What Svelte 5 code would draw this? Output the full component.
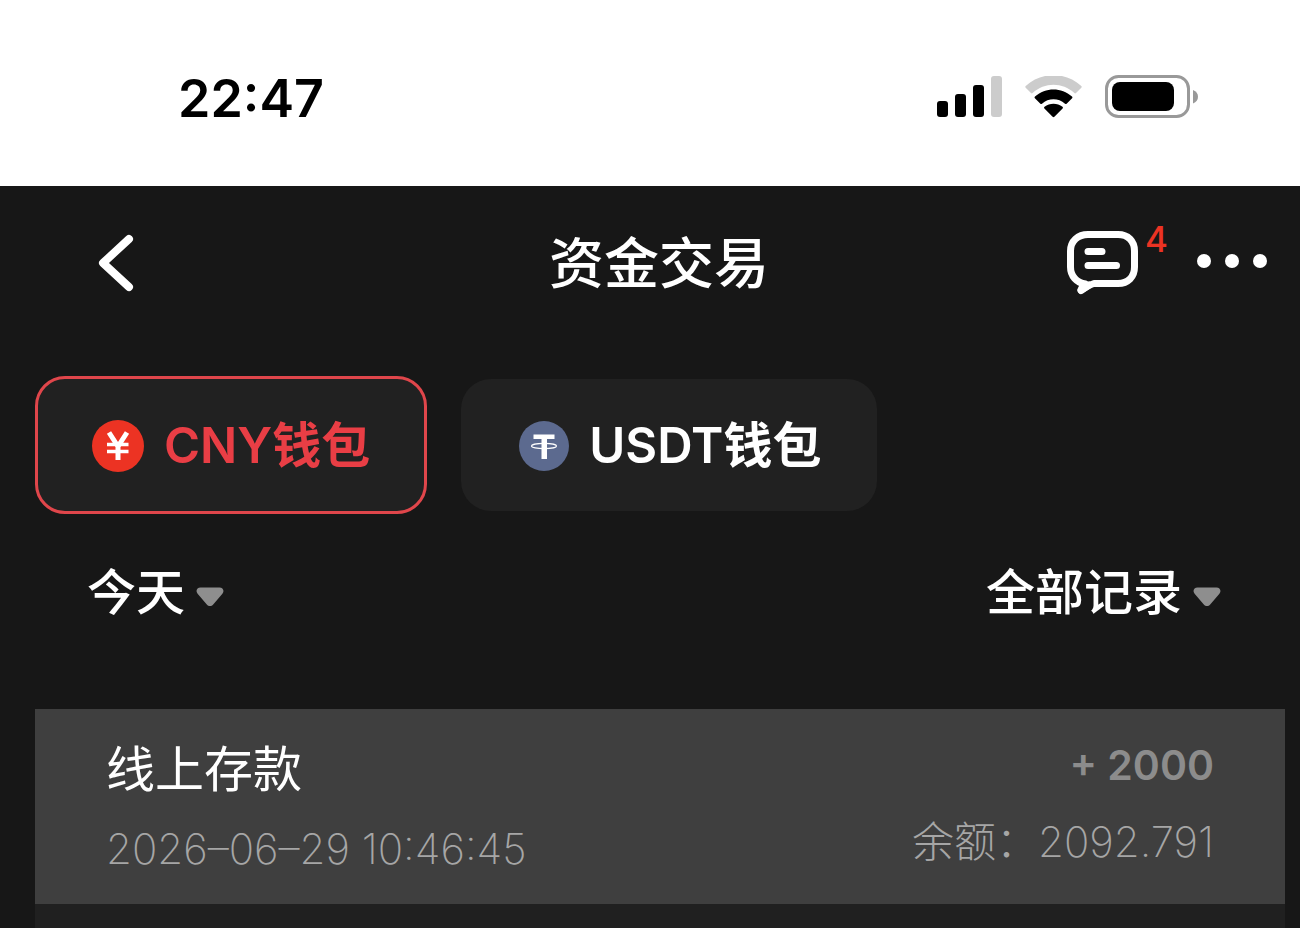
<script lang="ts">
	interface RecordItem {
		title: string;
		time: string;
		amount: string;
		balance: string;
	}

	let wallet = $state('CNY');
	let day = $state('今天');
	let kind = $state('全部记录');

	const unread = 4;
	const records: RecordItem[] = [
		{ title: '线上存款', time: '2026–06–29 10:46:45', amount: '+ 2000', balance: '2092.791' }
	];
</script>

{#snippet caret()}
	<svg class="caret" viewBox="0 0 28 20" aria-hidden="true">
		<path d="M4.500 .5h19c3.600 0 5.200 3.600 2.900 6.200L17.200 17.400c-1.800 2.100-4.600 2.100-6.400 0L1.600 6.700C-.7 4.100.9.500 4.500.500z" />
	</svg>
{/snippet}

<div class="screen">
	<div class="status-bar">
		<span class="clock">22:47</span>
		<div class="status-icons">
			<svg class="signal" viewBox="0 0 66 42" aria-hidden="true">
				<rect x="0" y="25" width="11" height="16" rx="3" />
				<rect x="18" y="18" width="11" height="23" rx="3" />
				<rect x="36" y="9" width="11" height="32" rx="3" />
				<rect x="54" y="0" width="11" height="41" rx="3" fill="#ccc" />
			</svg>
			<svg class="wifi" viewBox="0 0 58 42" aria-hidden="true">
				<path fill="#ccc" d="M.7 10C16.500-4.500 40.500-4.500 56.300 10c.6.600.6 1.100 0 1.700l-5.300 5.300c-.5.500-1 .5-1.600 0-12-11-29.800-11-41.800 0-.6.500-1.100.5-1.600 0L.7 11.700C.1 11.100.1 10.600.7 10z" />
				<path d="M10 20.500c10.600-9.400 26.400-9.400 37 0 .6.600.6 1.100.1 1.700l-5.500 5.500c-.5.500-1 .5-1.600 0-6.600-5.800-16.400-5.800-23 0-.6.500-1.100.5-1.600 0l-5.500-5.500c-.5-.6-.5-1.100.1-1.700z" />
				<path d="M19.500 30.800c5.200-4 12.800-4 18 0 .6.500.6 1.100.1 1.700l-8.200 8.300c-.6.600-1.200.6-1.800 0l-8.200-8.300c-.5-.6-.5-1.200.1-1.700z" />
			</svg>
			<svg class="battery" viewBox="0 0 94 44" aria-hidden="true">
				<rect x="1.500" y="1.500" width="82" height="40" rx="12" fill="none" stroke="#999" stroke-width="3" />
				<rect x="7" y="7" width="62" height="29" rx="8" />
				<path fill="#999" d="M88 15c3.300 1.200 5 3.700 5 6.700s-1.700 5.500-5 6.700z" />
			</svg>
		</div>
	</div>

	<header class="nav">
		<button class="icon-btn back" aria-label="返回">
			<svg viewBox="0 0 36 60" width="36" height="60">
				<path d="M31 7 5 31 31 55" fill="none" stroke="#fff" stroke-width="8" stroke-linecap="round" stroke-linejoin="round" />
			</svg>
		</button>
		<h1>资金交易</h1>
		<div class="nav-actions">
			<button class="icon-btn message" aria-label="消息">
				<svg viewBox="0 0 72 66" width="72" height="66" fill="none" stroke="#fff" stroke-width="7" stroke-linecap="round" stroke-linejoin="round">
					<path d="M21 5.500h30c10 0 16.500 6.500 16.500 16.500v16c0 10-6.500 16.500-16.500 16.500H27c-3.500 1-8.500 4-13 6.500.5-2.500 2.500-4.500 4.500-6C9.500 53.500 3.500 47 3.500 38V22C3.500 12 11 5.500 21 5.500z" />
					<path d="M14 61.500 22 56" />
					<path d="M21 22.500h14M21 36.500h28.500" />
				</svg>
				<span class="badge">{unread}</span>
			</button>
			<button class="icon-btn" aria-label="更多">
				<svg viewBox="0 0 72 16" width="72" height="16" fill="#fff">
					<circle cx="8" cy="7" r="7" />
					<circle cx="36" cy="7" r="7" />
					<circle cx="64" cy="7" r="7" />
				</svg>
			</button>
		</div>
	</header>

	<div class="wallets">
		<button class="wallet" class:active={wallet === 'CNY'} onclick={() => (wallet = 'CNY')}>
			<svg viewBox="0 0 52 52" width="52" height="52" aria-hidden="true">
				<circle cx="26" cy="26" r="26" fill="#ec3323" />
				<path d="M17 12.500 26 26.500 35 12.500M26 25v15" fill="none" stroke="#fff" stroke-width="5" />
				<path d="M15 24.500h21.500M15 31.500h21.500" fill="none" stroke="#fff" stroke-width="3.600" />
			</svg>
			CNY钱包
		</button>
		<button class="wallet" class:active={wallet === 'USDT'} onclick={() => (wallet = 'USDT')}>
			<svg viewBox="0 0 52 52" width="52" height="52" aria-hidden="true">
				<circle cx="27" cy="26" r="25" fill="#5c6a8f" />
				<path d="M16.500 14.500h21v4.500H30V39h-5.500V19h-8z" fill="#fff" />
				<ellipse cx="27" cy="26" rx="12.500" ry="2.700" fill="none" stroke="#fff" stroke-width="1.200" />
			</svg>
			USDT钱包
		</button>
	</div>

	<div class="filters">
		<label class="filter">
			<select bind:value={day} aria-label="日期">
				<option>今天</option>
			</select>
			{@render caret()}
		</label>
		<label class="filter">
			<select bind:value={kind} aria-label="类型">
				<option>全部记录</option>
			</select>
			{@render caret()}
		</label>
	</div>

	<ul class="records">
		{#each records as item (item.time)}
			<li class="record">
				<div class="col">
					<span class="title">{item.title}</span>
					<span class="sub">{item.time}</span>
				</div>
				<div class="col right">
					<span class="amount">{item.amount}</span>
					<span class="sub">余额：{item.balance}</span>
				</div>
			</li>
		{/each}
	</ul>
</div>

<style>
	:global(body) {
		margin: 0;
		background: #171717;
	}

	.screen {
		display: flex;
		flex-direction: column;
		min-height: 100vh;
		background: #171717;
		color: #fff;
		font-family: Inter, 'Noto Sans CJK SC', sans-serif;
	}

	button,
	select {
		font: inherit;
		color: inherit;
		background: none;
		border: 0;
		padding: 0;
		cursor: pointer;
	}

	.status-bar {
		display: flex;
		align-items: center;
		justify-content: space-between;
		box-sizing: border-box;
		height: 186px;
		padding: 8px 101px 0 178px;
		background: #fff;
		color: #000;
	}

	.clock {
		padding-top: 4px;
		font-size: 52px;
		font-weight: 600;
		line-height: 64px;
	}

	.status-icons {
		display: flex;
		align-items: center;
		gap: 22px;
	}

	.signal {
		width: 66px;
		height: 42px;
	}

	.wifi {
		width: 58px;
		height: 42px;
	}

	.battery {
		width: 94px;
		height: 44px;
	}

	.nav {
		display: grid;
		grid-template-columns: 1fr auto 1fr;
		align-items: center;
		height: 152px;
		padding: 0 32px 0 50px;
	}

	.icon-btn {
		display: flex;
		position: relative;
	}

	.back {
		justify-self: start;
		padding-left: 48px;
	}

	h1 {
		margin: 0;
		padding-top: 2px;
		font-size: 55px;
		font-weight: 500;
		line-height: 80px;
	}

	.nav-actions {
		display: flex;
		align-items: center;
		justify-content: flex-end;
		gap: 57px;
	}

	.badge {
		position: absolute;
		left: 78px;
		top: -10px;
		font-size: 35px;
		font-weight: 500;
		line-height: 40px;
		color: #ec3323;
	}

	.wallets {
		display: flex;
		align-items: center;
		gap: 34px;
		padding: 38px 35px 0;
	}

	.wallet {
		display: flex;
		align-items: center;
		gap: 20px;
		padding: 31px 56px 29px;
		border-radius: 30px;
		background: #212121;
		font-size: 49px;
		font-weight: 600;
		line-height: 72px;
	}

	.wallet.active {
		padding: 31px 54px 29px;
		border: 3px solid #e0464b;
		color: #e93e45;
	}

	.filters {
		display: flex;
		justify-content: space-between;
		padding: 43px 79px 0 87px;
	}

	.filter {
		display: flex;
		align-items: center;
		gap: 10px;
		font-size: 49px;
		font-weight: 500;
		line-height: 72px;
	}

	select {
		appearance: none;
		outline: none;
	}

	option {
		color: #000;
	}

	.caret {
		width: 28px;
		height: 20px;
		margin-top: 8px;
		fill: #8e8e8e;
	}

	.records {
		flex: 1;
		margin: 80px 15px 0 35px;
		padding: 0;
		list-style: none;
		background: #202020;
	}

	.record {
		display: flex;
		justify-content: space-between;
		padding: 25px 71px;
		margin-bottom: 24px;
		background: #3f3f3f;
	}

	.col {
		display: flex;
		flex-direction: column;
		gap: 13px;
	}

	.title {
		font-size: 49px;
		line-height: 72px;
	}

	.right {
		align-items: flex-end;
		gap: 16px;
	}

	.amount {
		font-size: 41px;
		font-weight: 600;
		line-height: 62px;
		color: #8c8c8c;
	}

	.sub {
		font-size: 42px;
		font-weight: 200;
		line-height: 60px;
		color: #a6a6a6;
	}
</style>
